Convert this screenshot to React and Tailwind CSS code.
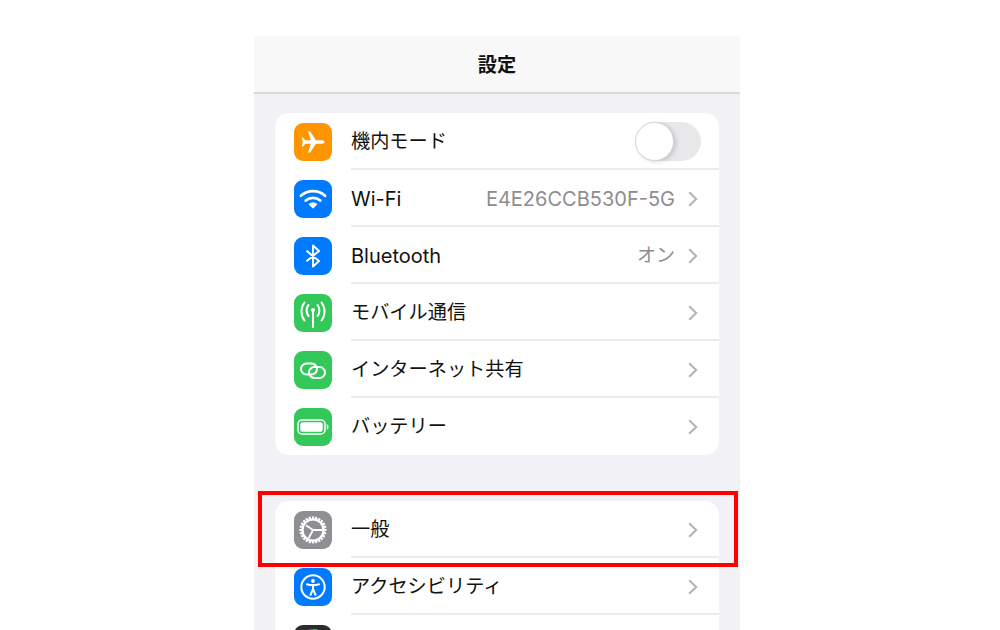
import React from 'react';

const FONT = { fontFamily: 'Inter, "Noto Sans CJK JP", sans-serif' };

const Chevron = () => (
  <svg width="10" height="16" viewBox="0 0 10 16" fill="none" className="shrink-0">
    <path d="M1.2 1.2 8.2 8l-7 6.8" stroke="#b3b3b6" strokeWidth="2" />
  </svg>
);

const Plane = () => (
  <svg width="28" height="28" viewBox="0 0 28 28" fill="#fff">
    <path d="M25.5 14c0-1.100-1.200-1.700-2.800-1.700h-5.800L11.200 3.500H9l2.800 8.800H6.200L4.200 9.500H2.800L3.800 14l-1 4.500h1.400l2-2.800h5.600L9 24.500h2.200l5.700-8.800h5.800c1.600 0 2.800-.6 2.800-1.700z" />
  </svg>
);

const Wifi = () => (
  <svg width="32" height="32" viewBox="0 0 28 28" fill="none" stroke="#fff" strokeLinecap="round" strokeWidth="2.300">
    <path d="M3.400 11.200c6-5.400 15.200-5.400 21.200 0" />
    <path d="M7.600 15.400c3.700-3.200 9.100-3.200 12.800 0" />
    <path d="M14 21.800l-3.200-3.200c2-1.500 4.400-1.500 6.400 0z" fill="#fff" strokeWidth="1" strokeLinejoin="round" />
  </svg>
);

const BluetoothIcon = () => (
  <svg width="28" height="28" viewBox="0 0 28 28" fill="none" stroke="#fff" strokeWidth="2" strokeLinejoin="round">
    <path d="M7.500 8.800 20 19 14 24.500V3.500L20 9 7.500 19.200" />
  </svg>
);

const Antenna = () => (
  <svg width="38" height="38" viewBox="0 0 38 38" fill="none" stroke="#fff" strokeWidth="2" strokeLinecap="round">
    <path d="M19 17v16" />
    <circle cx="19" cy="16" r="2" fill="#fff" stroke="none" />
    <path d="M14.500 22c-2.500-3-2.500-8 0-11M23.500 11c2.500 3 2.500 8 0 11" />
    <path d="M10.500 26.500c-4-5-4-13 0-18M27.500 8.500c4 5 4 13 0 18" />
  </svg>
);

const Chain = () => (
  <svg width="38" height="38" viewBox="0 0 38 38" fill="none" stroke="#fff" strokeWidth="2" strokeLinecap="round">
    <path d="M22.980 17.500a5.500 5.500 0 0 1-5.480 6h-5a5.500 5.500 0 0 1 0-11h5a5.500 5.500 0 0 1 4.240 2" />
    <path d="M16.260 25a5.500 5.500 0 0 0 4.240 2h5a5.500 5.500 0 0 0 0-11h-5a5.500 5.500 0 0 0-5.480 6" />
  </svg>
);

const BatteryIcon = () => (
  <svg width="32" height="28" viewBox="0 0 32 28" fill="none">
    <rect x="1" y="7" width="27" height="14" rx="4" stroke="#fff" strokeWidth="1.500" />
    <rect x="3.300" y="9.300" width="22.400" height="9.400" rx="2" fill="#fff" />
    <path d="M29.800 11.300v5.400c1.200-.4 1.700-1.500 1.700-2.700s-.5-2.300-1.700-2.700z" fill="#fff" />
  </svg>
);

const Gear = () => {
  const teeth = Array.from({ length: 24 }, (_, i) => i * 15);
  return (
    <svg width="32" height="32" viewBox="0 0 32 32" fill="none" stroke="#fff">
      <circle cx="16" cy="16" r="10.500" strokeWidth="2.200" />
      {teeth.map((deg) => (
        <path key={deg} d="M16 2.400v3" strokeWidth="2.200" transform={`rotate(${deg} 16 16)`} />
      ))}
      <path d="M16 16 9 11.300M16 16h9.500M16 16l-4.500 8.500" strokeWidth="1.800" />
    </svg>
  );
};

const Accessibility = () => (
  <svg width="30" height="30" viewBox="0 0 30 30" fill="none" stroke="#fff">
    <circle cx="15" cy="15" r="11.700" strokeWidth="2" />
    <circle cx="15" cy="9" r="1.900" fill="#fff" stroke="none" />
    <path d="M9 12.300c4 1.200 8 1.200 12 0" strokeWidth="2" strokeLinecap="round" />
    <path d="M15 13v4.500M15 17l-2.500 5.800M15 17l2.500 5.800" strokeWidth="2" strokeLinecap="round" />
  </svg>
);

const Display = () => (
  <svg width="38" height="38" viewBox="0 0 38 38" fill="none">
    <circle cx="19" cy="19" r="13" stroke="#6b6f6c" strokeWidth="4" />
    <path d="M19 6a13 13 0 0 1 11 6" stroke="#37c759" strokeWidth="4" />
  </svg>
);

const Row = ({ icon, color, label, value, valueSize = 'text-[20px]', toggle, last, latin }) => (
  <div className="flex h-[57px] items-center pl-[19px]">
    <div className={`flex h-[38px] w-[38px] shrink-0 items-center justify-center overflow-hidden rounded-[9px] ${color}`}>
      {icon}
    </div>
    <div className={`ml-[19px] flex h-full min-w-0 flex-1 items-center pr-[18px] pt-[2px] ${last ? 'pb-[2px]' : 'border-b-2 border-[#ebebed]'}`}>
      <span className={`${latin ? 'text-[20px]' : 'text-[19.2px]'} leading-none text-[#111]`}>{label}</span>
      <div className="ml-auto flex items-center">
        {value && <span className={`mr-[13px] ${valueSize} leading-none text-[#8d8d90]`}>{value}</span>}
        {toggle ? (
          <div className="relative h-[39px] w-[66px] rounded-full bg-[#e8e8ea]">
            <div className="absolute left-0 top-0 h-[39px] w-[39px] rounded-full border border-[#d8d8da] bg-white shadow-[2px_1px_4px_rgba(0,0,0,0.15)]" />
          </div>
        ) : (
          <div className="mr-[3px]"><Chevron /></div>
        )}
      </div>
    </div>
  </div>
);

const App = () => (
  <div className="flex h-[630px] justify-center overflow-hidden bg-white pt-[36px]" style={FONT}>
    <div className="relative ml-[-6px] h-[594px] w-[486px] shrink-0 overflow-hidden bg-[#f1f1f6]">
      <div className="flex h-[58px] items-center justify-center border-b-2 border-[#d9d9dc] bg-[#f8f8f9] pt-[4px]">
        <span className="text-[19.2px] font-bold leading-none text-[#111]">設定</span>
      </div>

      <div className="px-[21px] pt-[19px]">
        <div className="overflow-hidden rounded-[14px] bg-white">
          <Row icon={<Plane />} color="bg-[#ff9500]" label="機内モード" toggle />
          <Row icon={<Wifi />} color="bg-[#007aff]" label="Wi-Fi" value="E4E26CCB530F-5G" latin />
          <Row icon={<BluetoothIcon />} color="bg-[#007aff]" label="Bluetooth" value="オン" valueSize="text-[19px]" latin />
          <Row icon={<Antenna />} color="bg-[#34c759]" label="モバイル通信" />
          <Row icon={<Chain />} color="bg-[#34c759]" label="インターネット共有" />
          <Row icon={<BatteryIcon />} color="bg-[#34c759]" label="バッテリー" last />
        </div>

        <div className="mt-[46px] overflow-hidden rounded-t-[14px] bg-white">
          <Row icon={<Gear />} color="bg-[#8e8e93]" label="一般" />
          <Row icon={<Accessibility />} color="bg-[#007aff]" label="アクセシビリティ" />
          <Row icon={<Display />} color="bg-[#2c2c2e]" label="" />
        </div>
      </div>

      <div className="absolute left-[4px] top-[455px] h-[76px] w-[480px] border-4 border-[#ff0000]" />
    </div>
  </div>
);

export default App;
